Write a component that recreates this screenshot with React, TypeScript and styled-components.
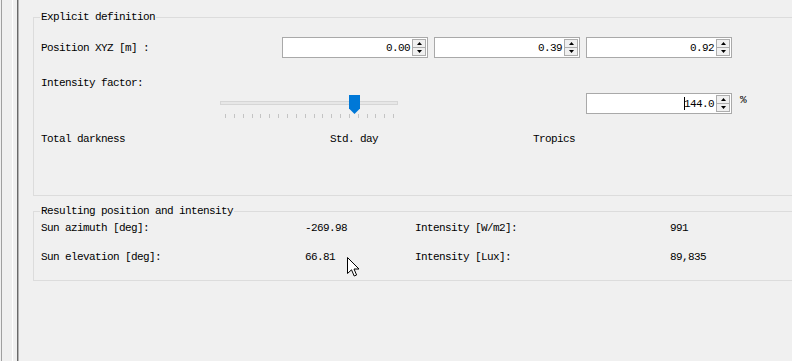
import React from "react";
import styled, { createGlobalStyle } from "styled-components";

const Global = createGlobalStyle`
  html, body { margin: 0; padding: 0; background: #f0f0f0; overflow: hidden; }
  body {
    width: 792px; height: 361px;
    font-family: "Liberation Mono", "DejaVu Sans Mono", monospace;
    font-size: 11px; letter-spacing: -0.6px; color: #000;
  }
`;

const Page = styled.div`
  position: relative;
  display: flex;
  width: 792px;
  height: 361px;
  overflow: hidden;
`;

const Strip = styled.div`
  flex: 0 0 19px;
  background: linear-gradient(
    to right,
    #f0f0f0 0 1px,
    #a0a0a0 1px 2px,
    #f0f0f0 2px 12px,
    #ffffff 12px 13px,
    #f0f0f0 13px 17px,
    #6a6a6a 17px 18px,
    #b4b4b4 18px 19px
  );
`;

const Main = styled.div`
  flex: 1;
  min-width: 0;
  padding: 17px 0 0 14px;
  overflow: hidden;
`;

const Group = styled.section<{ $h: number; $pt: number; $mt?: number }>`
  position: relative;
  box-sizing: border-box;
  width: 820px;
  height: ${(p) => p.$h}px;
  margin-top: ${(p) => p.$mt ?? 0}px;
  padding: ${(p) => p.$pt}px 0 0 7px;
  border: 1px solid #dcdcdc;
`;

const Legend = styled.div`
  position: absolute;
  top: -8px;
  left: 6px;
  padding: 0 1px;
  line-height: 14px;
  background: #f0f0f0;
  white-space: nowrap;
`;

const Label = styled.span`
  line-height: 14px;
  white-space: nowrap;
`;

const XYZRow = styled.div`
  display: grid;
  grid-template-columns: 235px repeat(3, 146px);
  column-gap: 6px;
  align-items: center;
  height: 21px;
`;

const FactorLabelRow = styled.div`
  margin-top: 18px;
  height: 14px;
  line-height: 14px;
`;

const SliderRow = styled.div`
  display: grid;
  grid-template-columns: 179px 178px 188px 146px auto;
  height: 30px;
  align-items: start;
`;

const ScaleRow = styled.div`
  display: grid;
  grid-template-columns: 289px 203px auto;
  margin-top: 12px;
  line-height: 14px;
`;

const ResultRow = styled.div<{ $mt?: number }>`
  display: grid;
  grid-template-columns: 264px 110px 255px auto;
  margin-top: ${(p) => p.$mt ?? 0}px;
  line-height: 14px;
  white-space: nowrap;
`;

const Box = styled.div<{ $mt?: number }>`
  box-sizing: border-box;
  display: flex;
  align-items: center;
  justify-content: flex-end;
  height: 21px;
  width: 146px;
  margin-top: ${(p) => p.$mt ?? 0}px;
  background: #fff;
  border: 1px solid #a9a9a9;
`;

const Value = styled.span`
  padding-right: 2px;
  line-height: 14px;
  white-space: nowrap;
`;

const Caret = styled.span`
  display: inline-block;
  width: 0;
  height: 13px;
  border-left: 1px solid #000;
  vertical-align: -3px;
  margin-right: -1px;
`;

const Spin = styled.div`
  box-sizing: border-box;
  display: flex;
  flex-direction: column;
  width: 14px;
  height: 17px;
  margin-right: 1px;
  border: 1px solid #adadad;
  background: #f0f0f0;
`;

const SpinHalf = styled.div<{ $top?: boolean }>`
  flex: 1;
  display: flex;
  align-items: center;
  justify-content: center;
  border-bottom: ${(p) => (p.$top ? "1px solid #adadad" : "none")};
`;

const Percent = styled.span`
  margin: 3px 0 0 8px;
  line-height: 14px;
`;

const Slider = styled.div`
  position: relative;
  height: 30px;
`;

const Track = styled.div`
  position: absolute;
  left: 0;
  right: 0;
  top: 11px;
  height: 4px;
  box-sizing: border-box;
  background: #e7e7e7;
  border: 1px solid #d6d6d6;
`;

const Thumb = styled.svg`
  position: absolute;
  left: 129px;
  top: 5px;
`;

const Ticks = styled.div`
  position: absolute;
  left: 5px;
  right: 5px;
  top: 24px;
  height: 4px;
`;

const Tick = styled.div`
  position: absolute;
  top: 0;
  width: 1px;
  height: 4px;
  background: #c4c4c4;
`;

const Cursor = styled.svg`
  position: absolute;
  left: 347px;
  top: 257px;
`;

const Up = () => (
  <svg width="5" height="3" viewBox="0 0 5 3">
    <path d="M2.5 0 L5 3 L0 3 Z" fill="#000" />
  </svg>
);
const Down = () => (
  <svg width="5" height="3" viewBox="0 0 5 3">
    <path d="M0 0 L5 0 L2.5 3 Z" fill="#000" />
  </svg>
);

const SpinBox: React.FC<{ value: string; caret?: boolean; mt?: number }> = ({ value, caret, mt }) => (
  <Box $mt={mt}>
    <Value>
      {caret && <Caret />}
      {value}
    </Value>
    <Spin>
      <SpinHalf $top>
        <Up />
      </SpinHalf>
      <SpinHalf>
        <Down />
      </SpinHalf>
    </Spin>
  </Box>
);

const tickXs = (() => {
  const xs: number[] = [];
  for (let i = 0; i <= 19; i++) xs.push(Math.round(i * 8.85));
  xs.push(168);
  return xs;
})();

export default function App() {
  return (
    <>
      <Global />
      <Page>
        <Strip />
        <Main>
          <Group $h={179} $pt={19}>
            <Legend>Explicit definition</Legend>
            <XYZRow>
              <Label>Position XYZ [m] :</Label>
              <SpinBox value="0.00" />
              <SpinBox value="0.39" />
              <SpinBox value="0.92" />
            </XYZRow>
            <FactorLabelRow>Intensity factor:</FactorLabelRow>
            <SliderRow>
              <span />
              <Slider>
                <Track />
                <Thumb width="11" height="19" viewBox="0 0 11 19">
                  <path d="M0 0 H11 V13.5 L5.5 19 L0 13.5 Z" fill="#0078d7" />
                </Thumb>
                <Ticks>
                  {tickXs.map((x, i) => (
                    <Tick key={i} style={{ left: x }} />
                  ))}
                </Ticks>
              </Slider>
              <span />
              <SpinBox value="144.0" caret mt={3} />
              <Percent>%</Percent>
            </SliderRow>
            <ScaleRow>
              <Label>Total darkness</Label>
              <Label>Std. day</Label>
              <Label>Tropics</Label>
            </ScaleRow>
          </Group>
          <Group $h={70} $pt={9} $mt={15}>
            <Legend>Resulting position and intensity</Legend>
            <ResultRow>
              <span>Sun azimuth [deg]:</span>
              <span>-269.98</span>
              <span>Intensity [W/m2]:</span>
              <span>991</span>
            </ResultRow>
            <ResultRow $mt={15}>
              <span>Sun elevation [deg]:</span>
              <span>66.81</span>
              <span>Intensity [Lux]:</span>
              <span>89,835</span>
            </ResultRow>
          </Group>
        </Main>
        <Cursor width="13" height="20" viewBox="0 0 13 20">
          <path
            d="M0.5 0.5 L0.5 16.5 L4.5 12.8 L7.2 19 L9.6 18 L7 12 L12 12 Z"
            fill="#fff"
            stroke="#000"
            strokeWidth="1"
            strokeLinejoin="miter"
          />
        </Cursor>
      </Page>
    </>
  );
}
